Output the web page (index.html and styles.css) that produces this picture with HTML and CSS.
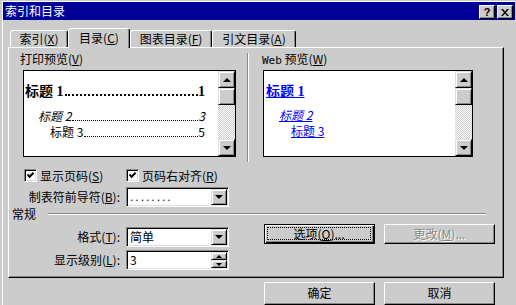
FILE: index.html
```html
<!DOCTYPE html>
<html lang="zh-CN">
<head>
  <meta charset="UTF-8" />
  <title>索引和目录</title>
  <link rel="stylesheet" href="styles.css">
</head>
<body>
  <div class="window">
    <div class="titlebar">
      <span class="title">索引和目录</span>
      <span class="tb-btn help">?</span>
      <span class="tb-btn">
        <svg width="8" height="7" viewBox="0 0 8 7"><path d="M0 0h2l2 2.4L6 0h2L5 3.5 8 7H6L4 4.6 2 7H0l3-3.5z"/></svg>
      </span>
    </div>

    <div class="dialog-body">
      <div class="tabs">
        <div class="tab t1">索引(<u>X</u>)</div>
        <div class="tab t2 active">目录(<u>C</u>)</div>
        <div class="tab t3">图表目录(<u>F</u>)</div>
        <div class="tab t4">引文目录(<u>A</u>)</div>
      </div>

      <div class="panel">
        <div class="previews">
          <div class="preview print">
            <div class="caption">打印预览(<u>V</u>)</div>
            <div class="listbox">
              <div class="list-body">
                <div class="toc l1"><span>标题 1</span><i class="dots"></i><span>1</span></div>
                <div class="toc l2"><span>标题 2</span><i class="dots"></i><span>3</span></div>
                <div class="toc l3"><span>标题 3</span><i class="dots"></i><span>5</span></div>
              </div>
              <div class="scrollbar">
                <div class="sb-btn"><i class="tri-up"></i></div>
                <div class="sb-btn"></div>
                <div class="sb-track"></div>
                <div class="sb-btn"><i class="tri-down"></i></div>
              </div>
            </div>
          </div>

          <div class="vline"></div>

          <div class="preview web">
            <div class="caption"><span class="mono">Web</span> 预览(<u>W</u>)</div>
            <div class="listbox">
              <div class="list-body">
                <div class="link l1">标题 1</div>
                <div class="link l2">标题 2</div>
                <div class="link l3">标题 3</div>
              </div>
              <div class="scrollbar">
                <div class="sb-btn"><i class="tri-up"></i></div>
                <div class="sb-btn"></div>
                <div class="sb-track"></div>
                <div class="sb-btn"><i class="tri-down"></i></div>
              </div>
            </div>
          </div>
        </div>

        <div class="checks">
          <div class="check">
            <span class="box"><svg width="7" height="7" viewBox="0 0 7 7"><path d="M0.5 2.5 L2.6 4.8 L6.6 0.8" stroke="#000" stroke-width="2" fill="none"/></svg></span>
            <span>显示页码(<u>S</u>)</span>
          </div>
          <div class="check">
            <span class="box"><svg width="7" height="7" viewBox="0 0 7 7"><path d="M0.5 2.5 L2.6 4.8 L6.6 0.8" stroke="#000" stroke-width="2" fill="none"/></svg></span>
            <span>页码右对齐(<u>R</u>)</span>
          </div>
        </div>

        <div class="field-row leader">
          <span class="field-label">制表符前导符(<u>B</u>):</span>
          <div class="combo">
            <span class="val leader-dots">........</span>
            <span class="drop"><i class="tri-down"></i></span>
          </div>
        </div>

        <div class="group">
          <span>常规</span>
          <span class="group-line"></span>
        </div>

        <div class="general">
          <div class="fields">
            <div class="field-row">
              <span class="field-label">格式(<u>T</u>):</span>
              <div class="combo">
                <span class="val">简单</span>
                <span class="drop"><i class="tri-down"></i></span>
              </div>
            </div>
            <div class="field-row">
              <span class="field-label">显示级别(<u>L</u>):</span>
              <div class="combo">
                <span class="val">3</span>
                <span class="spin">
                  <span class="spin-btn"><i class="tri-up small"></i></span>
                  <span class="spin-btn"><i class="tri-down small"></i></span>
                </span>
              </div>
            </div>
          </div>

          <div class="actions">
            <div class="btn default"><span class="focus">选项(<u>O</u>)...</span></div>
            <div class="btn disabled">更改(<u>M</u>)...</div>
          </div>
        </div>
      </div>

      <div class="dialog-buttons">
        <div class="btn">确定</div>
        <div class="btn">取消</div>
      </div>
    </div>
  </div>
</body>
</html>
```

FILE: styles.css
```css
body {
  margin: 0;
  background: #cccccc;
  font: 12px/14px "Noto Sans CJK SC", sans-serif;
  color: #000;
  overflow: hidden;
}

u {
  text-decoration: underline;
}

.window {
  margin: 1px 0 0 2px;
  border-top: 1px solid #fff;
  border-left: 1px solid #fff;
  width: 512px;
}

/* title bar */
.titlebar {
  display: flex;
  align-items: flex-start;
  height: 18px;
  padding: 0 2px;
  background: #000099;
  color: #fff;
}

.title {
  flex: 1;
  line-height: 18px;
}

.tb-btn {
  width: 16px;
  height: 14px;
  margin-top: 3px;
  box-sizing: border-box;
  background: #ccc;
  border: 1px solid;
  border-color: #fff #000 #000 #fff;
  box-shadow: inset -1px -1px #888;
  display: flex;
  align-items: center;
  justify-content: center;
  color: #000;
}

.tb-btn + .tb-btn {
  margin-left: 2px;
}

.help {
  font: bold 11px/12px "Liberation Sans", sans-serif;
}

.dialog-body {
  padding: 8px 0 0 5px;
}

/* tabs */
.tabs {
  display: flex;
  align-items: flex-end;
  height: 19px;
  padding-left: 2px;
}

.tab {
  box-sizing: border-box;
  height: 17px;
  border: 1px solid;
  border-bottom: none;
  border-color: #fff #000 transparent #fff;
  border-radius: 3px 3px 0 0;
  box-shadow: inset -1px 0 #888;
  text-align: center;
  line-height: 16px;
  background: #ccc;
}

.t1 { width: 58px; }
.t2 { width: 62px; }
.t3 { width: 82px; }
.t4 { width: 84px; }

.tab.active {
  height: 20px;
  margin-bottom: -1px;
  line-height: 18px;
  position: relative;
  z-index: 1;
}

/* tab panel */
.panel {
  box-sizing: border-box;
  width: 496px;
  height: 231px;
  border: 1px solid;
  border-color: #fff #000 #000 #fff;
  box-shadow: inset -1px -1px #888;
}

.previews {
  display: flex;
  height: 114px;
}

.preview {
  padding-top: 4px;
}

.preview.print {
  margin-left: 11px;
}

.preview.web {
  margin-left: 13px;
}

.caption {
  height: 14px;
  line-height: 14px;
  margin-bottom: 4px;
}

.mono {
  font-family: "DejaVu Sans Mono", monospace;
  font-size: 11px;
}

.listbox {
  box-sizing: border-box;
  height: 87px;
  border: 1px solid #000;
  background: #fff;
  display: flex;
}

.print .listbox {
  margin-left: 3px;
  width: 213px;
}

.web .listbox {
  margin-left: 1px;
  width: 210px;
}

.list-body {
  flex: 1;
  overflow: hidden;
}

.print .list-body {
  padding: 13px 13px 0 1px;
}

.web .list-body {
  padding: 13px 0 0 2px;
}

.toc {
  display: flex;
  align-items: baseline;
  white-space: nowrap;
  line-height: 16px;
}

.toc .dots {
  flex: 1;
  margin-left: 1px;
  border-bottom: 1px dotted #000;
}

.toc.l1 {
  font: bold 14px/16px "Liberation Serif", "Noto Sans CJK SC", serif;
}

.toc.l1 .dots {
  border-bottom-width: 2px;
}

.toc.l2 {
  font-style: italic;
  margin: 8px 0 0 13px;
}

.toc.l3 {
  margin-left: 25px;
}

.link {
  color: #0000ff;
  text-decoration: underline;
  line-height: 16px;
}

.link.l1 {
  font: bold 14px/16px "Liberation Serif", "Noto Sans CJK SC", serif;
}

.link.l2 {
  font-style: italic;
  margin: 7px 0 0 13px;
}

.link.l3 {
  margin-left: 25px;
}

/* scrollbar */
.scrollbar {
  width: 17px;
  display: flex;
  flex-direction: column;
  background: repeating-conic-gradient(#fff 0 25%, #ccc 0 50%) 0 0 / 2px 2px;
}

.sb-btn,
.drop,
.spin-btn {
  box-sizing: border-box;
  background: #ccc;
  border: 1px solid;
  border-color: #dfdfdf #000 #000 #dfdfdf;
  box-shadow: inset 1px 1px #fff, inset -1px -1px #888;
  display: flex;
  align-items: center;
  justify-content: center;
}

.sb-btn {
  height: 17px;
}

.sb-track {
  flex: 1;
}

.tri-up,
.tri-down {
  width: 0;
  height: 0;
  border-left: 4px solid transparent;
  border-right: 4px solid transparent;
}

.tri-up {
  border-bottom: 4px solid #000;
}

.tri-down {
  border-top: 4px solid #000;
}

.tri-up.small,
.tri-down.small {
  border-left-width: 3px;
  border-right-width: 3px;
}

.tri-up.small { border-bottom-width: 3px; }
.tri-down.small { border-top-width: 3px; }

/* vertical groove between the previews */
.vline {
  margin: 5px 0 0 11px;
  height: 109px;
  border-left: 1px solid #888;
  border-right: 1px solid #fff;
}

/* check boxes */
.checks {
  display: flex;
  align-items: center;
  height: 13px;
  margin: 7px 0 0 15px;
  line-height: 13px;
}

.check {
  display: flex;
  align-items: center;
  gap: 3px;
}

.check:first-child {
  width: 102px;
}

.box {
  width: 13px;
  height: 13px;
  box-sizing: border-box;
  background: #fff;
  border: 1px solid;
  border-color: #888 #fff #fff #888;
  box-shadow: inset 1px 1px #000, inset -1px -1px #dfdfdf;
  display: flex;
  align-items: center;
  justify-content: center;
}

/* fields */
.field-row {
  display: flex;
  align-items: center;
  height: 20px;
}

.field-row.leader {
  margin-top: 5px;
}

.field-label {
  width: 117px;
  box-sizing: border-box;
  text-align: right;
  padding-right: 6px;
}

.combo {
  width: 103px;
  height: 20px;
  box-sizing: border-box;
  background: #fff;
  border: 1px solid;
  border-color: #888 #fff #fff #888;
  box-shadow: inset 1px 1px #000, inset -1px -1px #dfdfdf;
  display: flex;
  align-items: center;
  padding: 1px;
}

.combo .val {
  flex: 1;
  padding-left: 2px;
}

.leader-dots {
  letter-spacing: 2px;
  font-family: "Liberation Sans", sans-serif;
}

.drop {
  width: 16px;
  height: 16px;
}

.spin {
  width: 16px;
  height: 16px;
  display: flex;
  flex-direction: column;
}

.spin-btn {
  height: 8px;
}

/* group separator */
.group {
  display: flex;
  align-items: center;
  height: 13px;
  margin-left: 3px;
  line-height: 13px;
}

.group-line {
  flex: 1;
  margin: 0 17px 0 12px;
  border-top: 1px solid #888;
  border-bottom: 1px solid #fff;
}

.general {
  display: flex;
  align-items: flex-start;
}

.fields {
  margin-top: 7px;
  display: flex;
  flex-direction: column;
  gap: 3px;
}

.actions {
  display: flex;
  gap: 9px;
  margin: 4px 0 0 35px;
}

/* push buttons */
.btn {
  width: 111px;
  height: 20px;
  box-sizing: border-box;
  background: #ccc;
  border: 1px solid;
  border-color: #fff #000 #000 #fff;
  box-shadow: inset -1px -1px #888;
  display: flex;
  align-items: center;
  justify-content: center;
}

.btn.default {
  border-color: #000;
  box-shadow: inset 1px 1px #fff, inset -1px -1px #000, inset -2px -2px #888;
}

.btn .focus {
  flex: 1;
  align-self: stretch;
  margin: 2px 3px 3px 2px;
  border: 1px dotted #000;
  display: flex;
  align-items: center;
  justify-content: center;
}

.btn.disabled {
  color: #888;
  text-shadow: 1px 1px #fff;
}

.dialog-buttons {
  display: flex;
  gap: 9px;
  margin: 4px 0 0 256px;
}

.dialog-buttons .btn {
  height: 23px;
  padding-bottom: 2px;
}
```
